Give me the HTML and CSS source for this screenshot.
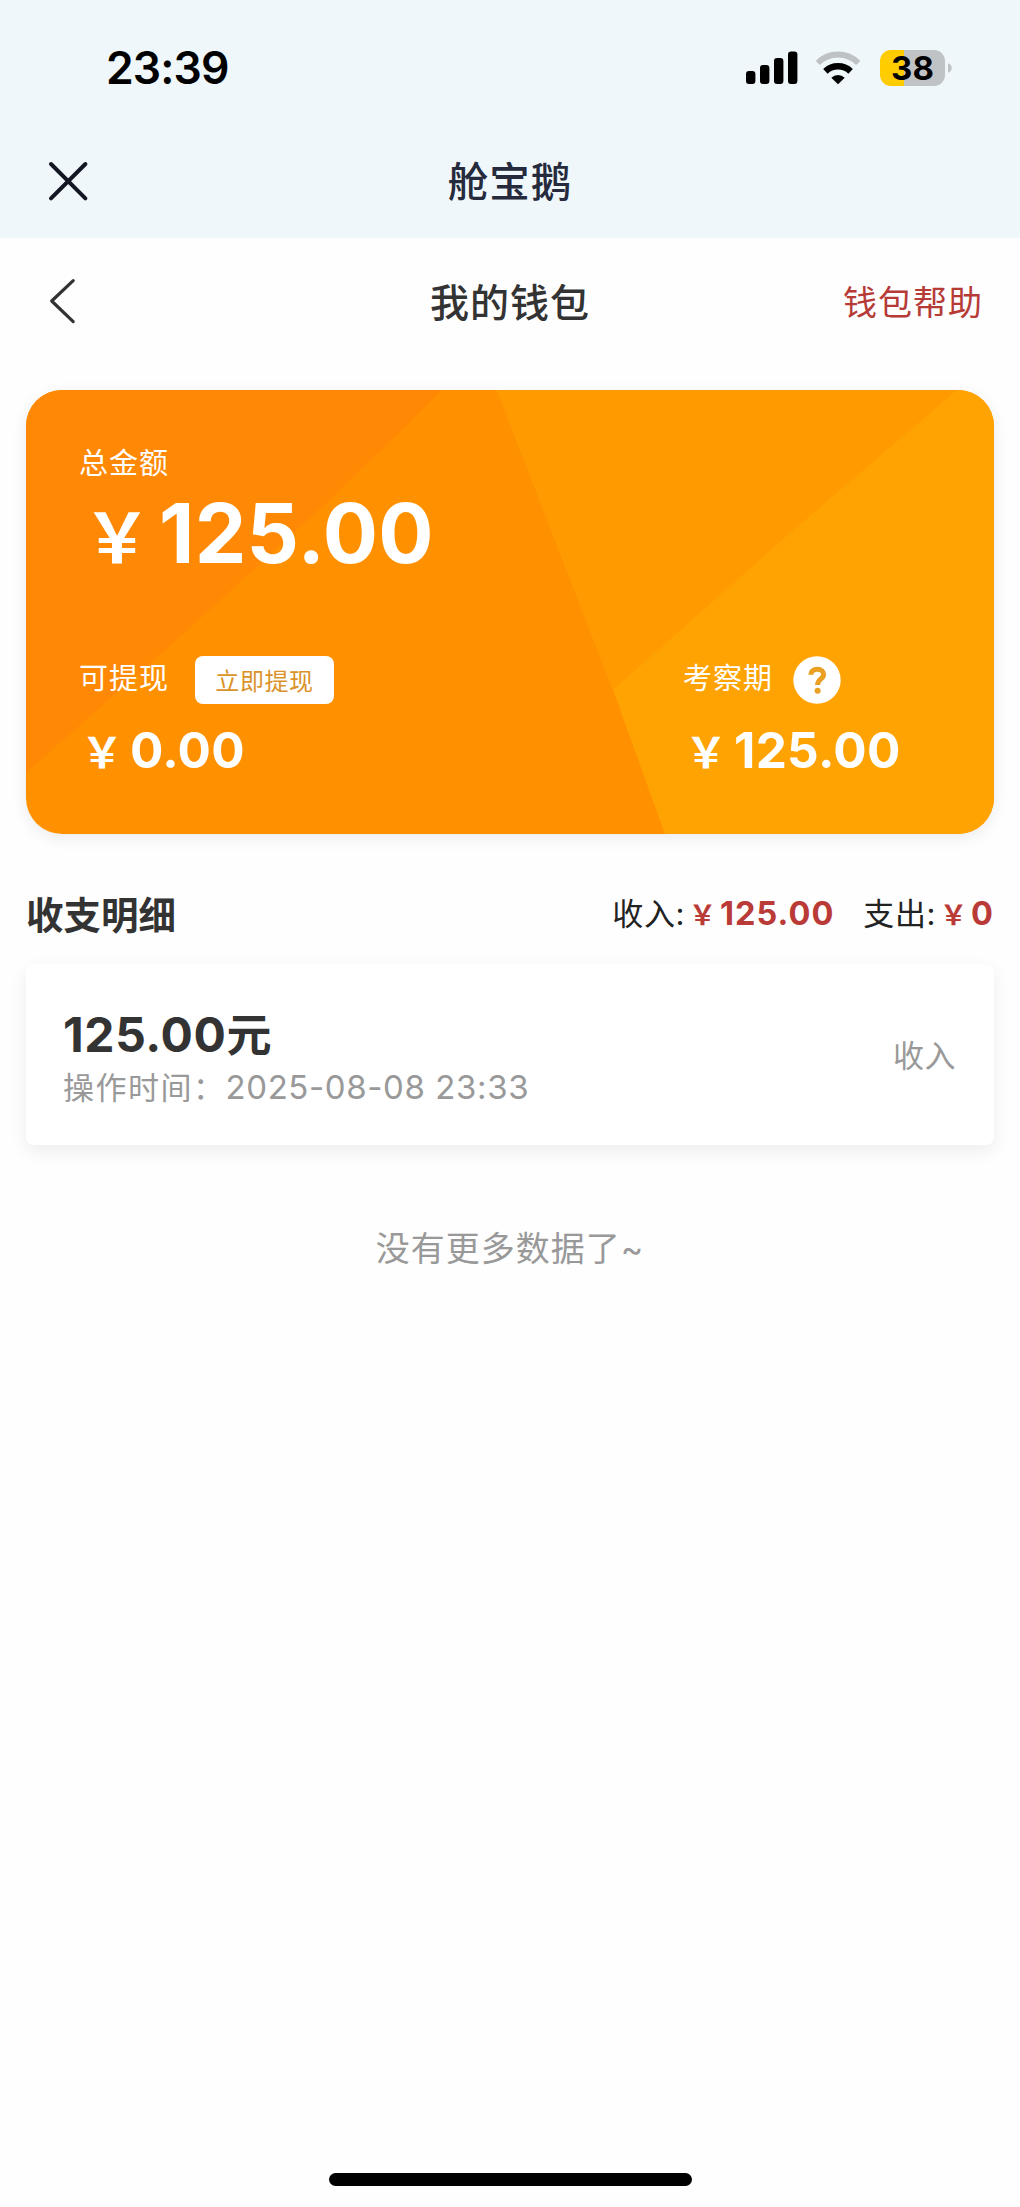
FILE: index.html
```html
<!DOCTYPE html>
<html lang="zh-CN">
<head>
<meta charset="utf-8">
<title>我的钱包</title>
<link rel="stylesheet" href="styles.css">
</head>
<body>
<div class="screen">
  <header class="top">
    <div class="status">
      <span class="time">23:39</span>
      <div class="indicators">
        <svg class="signal" width="52" height="34" viewBox="0 0 52 34"><rect x="0" y="20" width="9.4" height="13" rx="3"/><rect x="14" y="14" width="9.4" height="19" rx="3"/><rect x="28" y="7" width="9.4" height="26" rx="3"/><rect x="42" y="0.5" width="9.4" height="32.5" rx="3"/></svg>
        <svg class="wifi" width="46" height="34" viewBox="0 0 46 34"><g fill="none"><path d="M2.8 12A28.500 28.500 0 0 1 43.2 12" stroke="#bfc2c4" stroke-width="6"/><path d="M10.4 20.4A18.3 18.3 0 0 1 35.6 20.4" stroke="#000" stroke-width="6.500"/></g><path d="M23 33.300L16.3 26.700A9.6 9.6 0 0 1 29.7 26.700Z"/></svg>
        <div class="battery"><span class="level">38</span></div>
        <svg class="nub" width="4" height="12" viewBox="0 0 4 12"><path d="M0 1.2C5 3 5 9 0 10.8Z" fill="#c0c3c5"/></svg>
      </div>
    </div>
    <div class="appbar">
      <svg class="close" width="42" height="42" viewBox="0 0 42 42"><path d="M3 3L37.400 37.400M37.400 3L3 37.400" fill="none" stroke="#151624" stroke-width="4" stroke-linecap="round"/></svg>
      <h1 class="app-name">舱宝鹅</h1>
    </div>
  </header>
  <nav class="nav">
    <svg class="back" width="30" height="46" viewBox="0 0 30 46"><path d="M24.200 2.700L2.700 23L24.200 43.600" fill="none" stroke="#333" stroke-width="3.200" stroke-linecap="round" stroke-linejoin="round"/></svg>
    <h2 class="nav-title">我的钱包</h2>
    <a class="nav-help">钱包帮助</a>
  </nav>
  <main class="main">
    <section class="wallet">
      <svg class="facets" viewBox="0 0 968 444" preserveAspectRatio="none"><rect width="968" height="444" fill="#ff9101"/><path d="M0 0H416L307 107L154 247L0 383Z" fill="#ff8904"/><path d="M471 0H968V444H639L587 300Z" fill="#ffa302"/><path d="M471 0H931L764 143L587 300Z" fill="#ff9b01"/></svg>
      <div class="total">
        <div class="label">总金额</div>
        <div class="amount amount-lg"><span class="yen">￥</span><span class="num">125.00</span></div>
      </div>
      <div class="split">
        <div class="part">
          <div class="part-head"><span class="label">可提现</span><button class="withdraw">立即提现</button></div>
          <div class="amount"><span class="yen">￥</span><span class="num">0.00</span></div>
        </div>
        <div class="part part-right">
          <div class="part-head"><span class="label">考察期</span><svg class="help" width="48" height="48" viewBox="0 0 48 48"><circle cx="24" cy="24" r="23.700" fill="#fff"/><path d="M17.800 18.800C17.800 15.200 20.600 13.300 24.300 13.300C28 13.300 30.600 15.200 30.600 18.400C30.600 23.200 24.600 22.800 24.600 29" fill="none" stroke="#eaa022" stroke-width="5"/><circle cx="24.600" cy="34.800" r="3" fill="#eaa022"/></svg></div>
          <div class="amount"><span class="yen">￥</span><span class="num">125.00</span></div>
        </div>
      </div>
    </section>
    <section class="summary">
      <h3 class="summary-title">收支明细</h3>
      <div class="sums">
        <div class="sum"><span class="sum-label">收入:</span><span class="sum-yen">￥</span><b class="sum-num">125.00</b></div>
        <div class="sum"><span class="sum-label">支出:</span><span class="sum-yen">￥</span><b class="sum-num">0</b></div>
      </div>
    </section>
    <article class="record">
      <div class="record-info">
        <div class="record-amount"><span class="record-num">125.00</span>元</div>
        <div class="record-time">操作时间：<span class="record-date">2025-08-08 23:33</span></div>
      </div>
      <span class="record-type">收入</span>
    </article>
    <p class="end">没有更多数据了<span class="tilde">~</span></p>
  </main>
  <div class="home"></div>
</div>
</body>
</html>
```
FILE: styles.css
```css
* { box-sizing: border-box; margin: 0; padding: 0; }
body { background: #fefefe; color: #333; font-family: Inter, "Noto Sans CJK SC", sans-serif; }
.screen { width: 1020px; height: 2207px; display: flex; flex-direction: column; }

.top { height: 238px; background: #eff7fa; }
.status { height: 136px; display: flex; justify-content: space-between; align-items: center; padding: 0 68px 0 106px; }
.time { font-size: 44.500px; font-weight: 600; line-height: 50px; letter-spacing: -.9px; color: #000; }
.indicators { display: flex; align-items: center; }
.wifi { margin-left: 17px; }
.battery { width: 65px; height: 36px; margin-left: 19px; border-radius: 11px; display: flex; align-items: center; justify-content: center; background: linear-gradient(90deg, #fc0 0 24px, #c0c3c5 24px); }
.level { font-size: 33px; font-weight: 700; line-height: 36px; color: #000; }
.nub { margin-left: 3px; }
.appbar { height: 102px; display: grid; grid-template-columns: 200px 1fr 200px; align-items: center; }
.close { margin: -10px 0 0 48px; }
.app-name { margin-top: -9px; text-align: center; font-size: 40.500px; font-weight: 500; line-height: 60px; letter-spacing: 1px; color: #262a3d; }

.nav { height: 126px; display: grid; grid-template-columns: 200px 1fr 200px; align-items: center; }
.back { margin-left: 49px; }
.nav-title { padding-top: 4px; text-align: center; font-size: 39px; font-weight: 500; line-height: 60px; letter-spacing: 1px; }
.nav-help { justify-self: end; padding: 3px 37px 0 0; font-size: 34px; line-height: 50px; letter-spacing: 1px; color: #b63a36; }

.main { flex: 1; padding: 26px 26px 0; }
.wallet { position: relative; height: 444px; padding: 54px 54px 0 53px; border-radius: 36px; overflow: hidden; color: #fff; box-shadow: 0 4px 16px rgba(0, 0, 0, .08); }
.facets { position: absolute; inset: 0; width: 100%; height: 100%; }
.total, .split { position: relative; }
.label { font-size: 29px; line-height: 40px; letter-spacing: 1px; }
.amount { height: 60px; display: flex; align-items: baseline; font-size: 49.500px; font-weight: 700; line-height: 60px; letter-spacing: .3px; }
.yen { width: 51px; padding-left: 2px; font-family: "Noto Sans CJK SC", sans-serif; font-size: 42px; line-height: 1; letter-spacing: 0; }
.amount-lg { height: 90px; margin-top: 5px; font-size: 82px; line-height: 90px; }
.amount-lg .yen { width: 80px; padding-left: 4px; font-size: 68px; }
.split { display: flex; margin-top: 77px; }
.part { width: 604px; }
.part-right { width: 257px; }
.part-head { height: 48px; display: flex; align-items: center; }
.part-head .label { margin-top: -2px; }
.withdraw { width: 139px; height: 48px; margin-left: 26px; border: 0; border-radius: 8px; background: #fff; color: #da932a; font: 24px/48px "Noto Sans CJK SC", sans-serif; letter-spacing: .6px; }
.help { margin-left: 20px; }
.part .amount { margin-top: 16px; }

.summary { height: 130px; display: flex; justify-content: space-between; align-items: center; padding-top: 30px; }
.summary-title { padding-top: 4px; font-size: 37.500px; font-weight: 700; line-height: 50px; }
.sums { display: flex; gap: 29px; }
.sum { height: 46px; display: flex; align-items: baseline; font-size: 31px; line-height: 46px; color: #222; }
.sum-label { letter-spacing: .6px; }
.sum-yen { width: 35px; padding-left: 4px; font-family: "Noto Sans CJK SC", sans-serif; font-size: 27px; line-height: 1; font-weight: 700; color: #b93a36; }
.sum-num { font-size: 32.500px; letter-spacing: 1px; color: #b93a36; }

.record { height: 181px; display: flex; justify-content: space-between; align-items: center; padding: 0 38px 0 37px; border-radius: 8px; background: #fff; box-shadow: 0 6px 18px rgba(0, 0, 0, .07); }
.record-info { padding-top: 8px; }
.record-amount { font-size: 45px; font-weight: 700; line-height: 56px; }
.record-num { font-size: 48px; letter-spacing: .6px; }
.record-time { font-size: 31px; line-height: 46px; letter-spacing: 1.500px; color: #999; }
.record-date { font-size: 33px; letter-spacing: .6px; }
.record-type { padding-top: 2px; font-size: 31px; line-height: 46px; letter-spacing: .5px; color: #999; }
.end { margin-top: 79px; text-align: center; font-size: 34px; line-height: 50px; letter-spacing: 1px; color: #999; }

.home { width: 363px; height: 13px; margin: 0 auto 21px; border-radius: 7px; background: #000; }
```
